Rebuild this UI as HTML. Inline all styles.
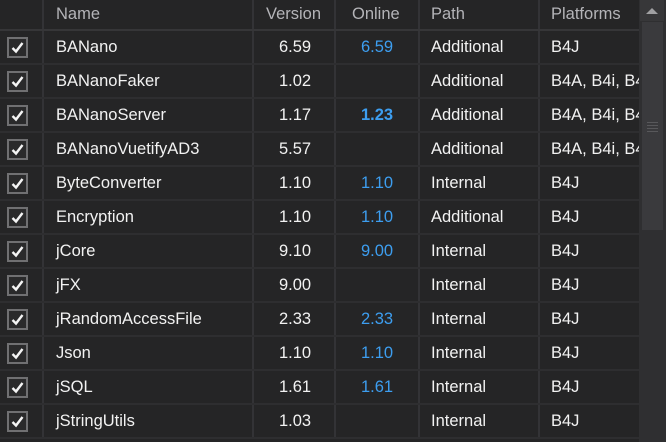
<!DOCTYPE html>
<html><head><style>
body{margin:0;width:666px;height:442px;overflow:hidden;background:#252526;font-family:"Liberation Sans",sans-serif;font-size:16.5px;color:#f2f2f2;position:relative}
.hdr{position:absolute;left:0;top:0;width:639px;height:29px;background:#252526;border-bottom:2px solid #363638;color:#b4b4b8}
.c{position:absolute;top:0;height:100%;box-sizing:border-box;border-right:2px solid #333336;white-space:nowrap;overflow:hidden}
.row{position:absolute;left:0;width:639px;height:32px;border-bottom:2px solid #2e2e30;background:#252526}
.t{position:absolute;top:0;line-height:32px}
.hdr .t{line-height:29px}
.cb{position:absolute;left:7px;top:6px;width:17px;height:17px;border:2px solid #707072;background:#2a2a2b}
.cb svg{position:absolute;left:1px;top:1px}
.blue{color:#3d9ef0}
.sb{position:absolute;left:639px;top:0;width:27px;height:442px;background:#2f2f31}
</style></head><body>
<div class="hdr">
<div class="c" style="left:0;width:44px"></div>
<div class="c" style="left:44px;width:210px"><span class="t" style="left:12px">Name</span></div>
<div class="c" style="left:254px;width:82px"><span class="t" style="left:12px">Version</span></div>
<div class="c" style="left:336px;width:84px"><span class="t" style="left:16px">Online</span></div>
<div class="c" style="left:420px;width:120px"><span class="t" style="left:11px">Path</span></div>
<div class="c" style="left:540px;width:99px;border:none"><span class="t" style="left:11px">Platforms</span></div>
</div>
<div id="rows"></div>
<div class="sb">
<div style="position:absolute;left:1px;top:0;width:24px;height:21px;background:#373739"></div>
<div style="position:absolute;left:7px;top:8px;width:0;height:0;border-left:6px solid transparent;border-right:6px solid transparent;border-bottom:6px solid #a0a0a2"></div>
<div style="position:absolute;left:3px;top:22px;width:21px;height:208px;background:#3a3a3d"></div>
<div style="position:absolute;left:8px;top:122px;width:11px;height:11px;background:repeating-linear-gradient(#58585b 0 1px,transparent 1px 3px)"></div>
</div>
<script>
var d=[["BANano","6.59","6.59","Additional","B4J"],["BANanoFaker","1.02","","Additional","B4A, B4i, B4J"],["BANanoServer","1.17","<b>1.23</b>","Additional","B4A, B4i, B4J"],["BANanoVuetifyAD3","5.57","","Additional","B4A, B4i, B4J"],["ByteConverter","1.10","1.10","Internal","B4J"],["Encryption","1.10","1.10","Additional","B4J"],["jCore","9.10","9.00","Internal","B4J"],["jFX","9.00","","Internal","B4J"],["jRandomAccessFile","2.33","2.33","Internal","B4J"],["Json","1.10","1.10","Internal","B4J"],["jSQL","1.61","1.61","Internal","B4J"],["jStringUtils","1.03","","Internal","B4J"]];
var h="";
d.forEach(function(r,i){var y=31+i*34;
h+='<div class="row" style="top:'+y+'px">'+
'<div class="c" style="left:0;width:44px"><div class="cb"><svg width="15" height="15" viewBox="0 0 15 15"><path d="M2.5 8 L6 11.5 L12.5 3" stroke="#f4f4f4" stroke-width="2.4" fill="none"/></svg></div></div>'+
'<div class="c" style="left:44px;width:210px"><span class="t" style="left:12px">'+r[0]+'</span></div>'+
'<div class="c" style="left:254px;width:82px"><span class="t" style="left:25px">'+r[1]+'</span></div>'+
'<div class="c" style="left:336px;width:84px"><span class="t blue" style="left:25px">'+r[2]+'</span></div>'+
'<div class="c" style="left:420px;width:120px"><span class="t" style="left:11px">'+r[3]+'</span></div>'+
'<div class="c" style="left:540px;width:99px;border:none"><span class="t" style="left:11px">'+r[4]+'</span></div></div>';});
document.getElementById("rows").innerHTML=h;
</script>
</body></html>
